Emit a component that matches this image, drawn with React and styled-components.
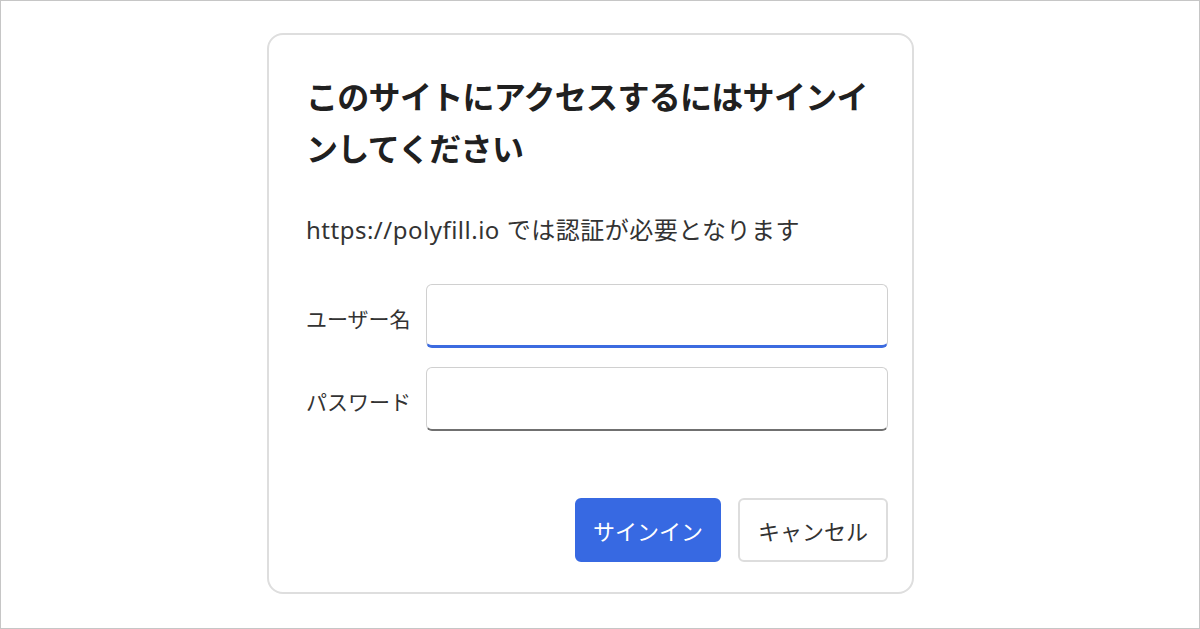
import React from 'react';
import styled, { createGlobalStyle } from 'styled-components';

const GlobalStyle = createGlobalStyle`
  html, body {
    margin: 0;
    padding: 0;
    background: #ffffff;
  }
  * {
    box-sizing: border-box;
  }
`;

const Page = styled.div`
  width: 1200px;
  height: 629px;
  border: 1px solid #c6c6c6;
  background: #ffffff;
  padding: 32px 0 0 266px;
  font-family: "Noto Sans", "Noto Sans CJK JP", sans-serif;
  color: #333333;
`;

const Dialog = styled.div`
  width: 647px;
  height: 561px;
  border: 2px solid #dedede;
  border-radius: 16px;
  background: #ffffff;
  padding: 34px 24px 30px 37px;
  display: flex;
  flex-direction: column;
`;

const Title = styled.h1`
  margin: 0 12px 0 0;
  font-family: "Noto Sans CJK JP", sans-serif;
  font-size: 32px;
  font-weight: 700;
  letter-spacing: -0.7px;
  line-height: 52px;
  color: #202020;
`;

const Message = styled.p`
  margin: 41px 0 0;
  font-size: 24px;
  letter-spacing: 0.5px;
  line-height: 32px;
  color: #333333;
`;

const Fields = styled.div`
  margin-top: 38px;
  display: grid;
  grid-template-columns: auto 1fr;
  column-gap: 15px;
  row-gap: 19px;
  align-items: center;
`;

const Label = styled.label`
  font-size: 21px;
  color: #333333;
  white-space: nowrap;
  padding-top: 4px;
`;

const Input = styled.input`
  height: 64px;
  width: 100%;
  border: 1px solid #d0d0d0;
  border-bottom: ${p => (p.$focused ? '3px solid #3c6be0' : '2px solid #707070')};
  border-radius: 6px;
  background: #ffffff;
  font-size: 22px;
  padding: 0 14px;
  outline: none;
`;

const Actions = styled.div`
  margin-top: auto;
  display: flex;
  justify-content: flex-end;
  gap: 17px;
`;

const Button = styled.button`
  height: 64px;
  padding: 0 ${p => (p.$primary ? '16px' : '18px')};
  border-radius: 6px;
  font-family: "Noto Sans CJK JP", sans-serif;
  font-size: 22px;
  cursor: pointer;
  background: ${p => (p.$primary ? '#3769e2' : '#ffffff')};
  color: ${p => (p.$primary ? '#ffffff' : '#333333')};
  border: ${p => (p.$primary ? '2px solid #3769e2' : '2px solid #dddddd')};
`;

export default function App() {
  return (
    <>
      <GlobalStyle />
      <Page>
        <Dialog>
          <Title>このサイトにアクセスするにはサインインしてください</Title>
          <Message>https://polyfill.io では認証が必要となります</Message>
          <Fields>
            <Label htmlFor="user">ユーザー名</Label>
            <Input id="user" type="text" $focused />
            <Label htmlFor="pass">パスワード</Label>
            <Input id="pass" type="password" />
          </Fields>
          <Actions>
            <Button $primary>サインイン</Button>
            <Button>キャンセル</Button>
          </Actions>
        </Dialog>
      </Page>
    </>
  );
}
